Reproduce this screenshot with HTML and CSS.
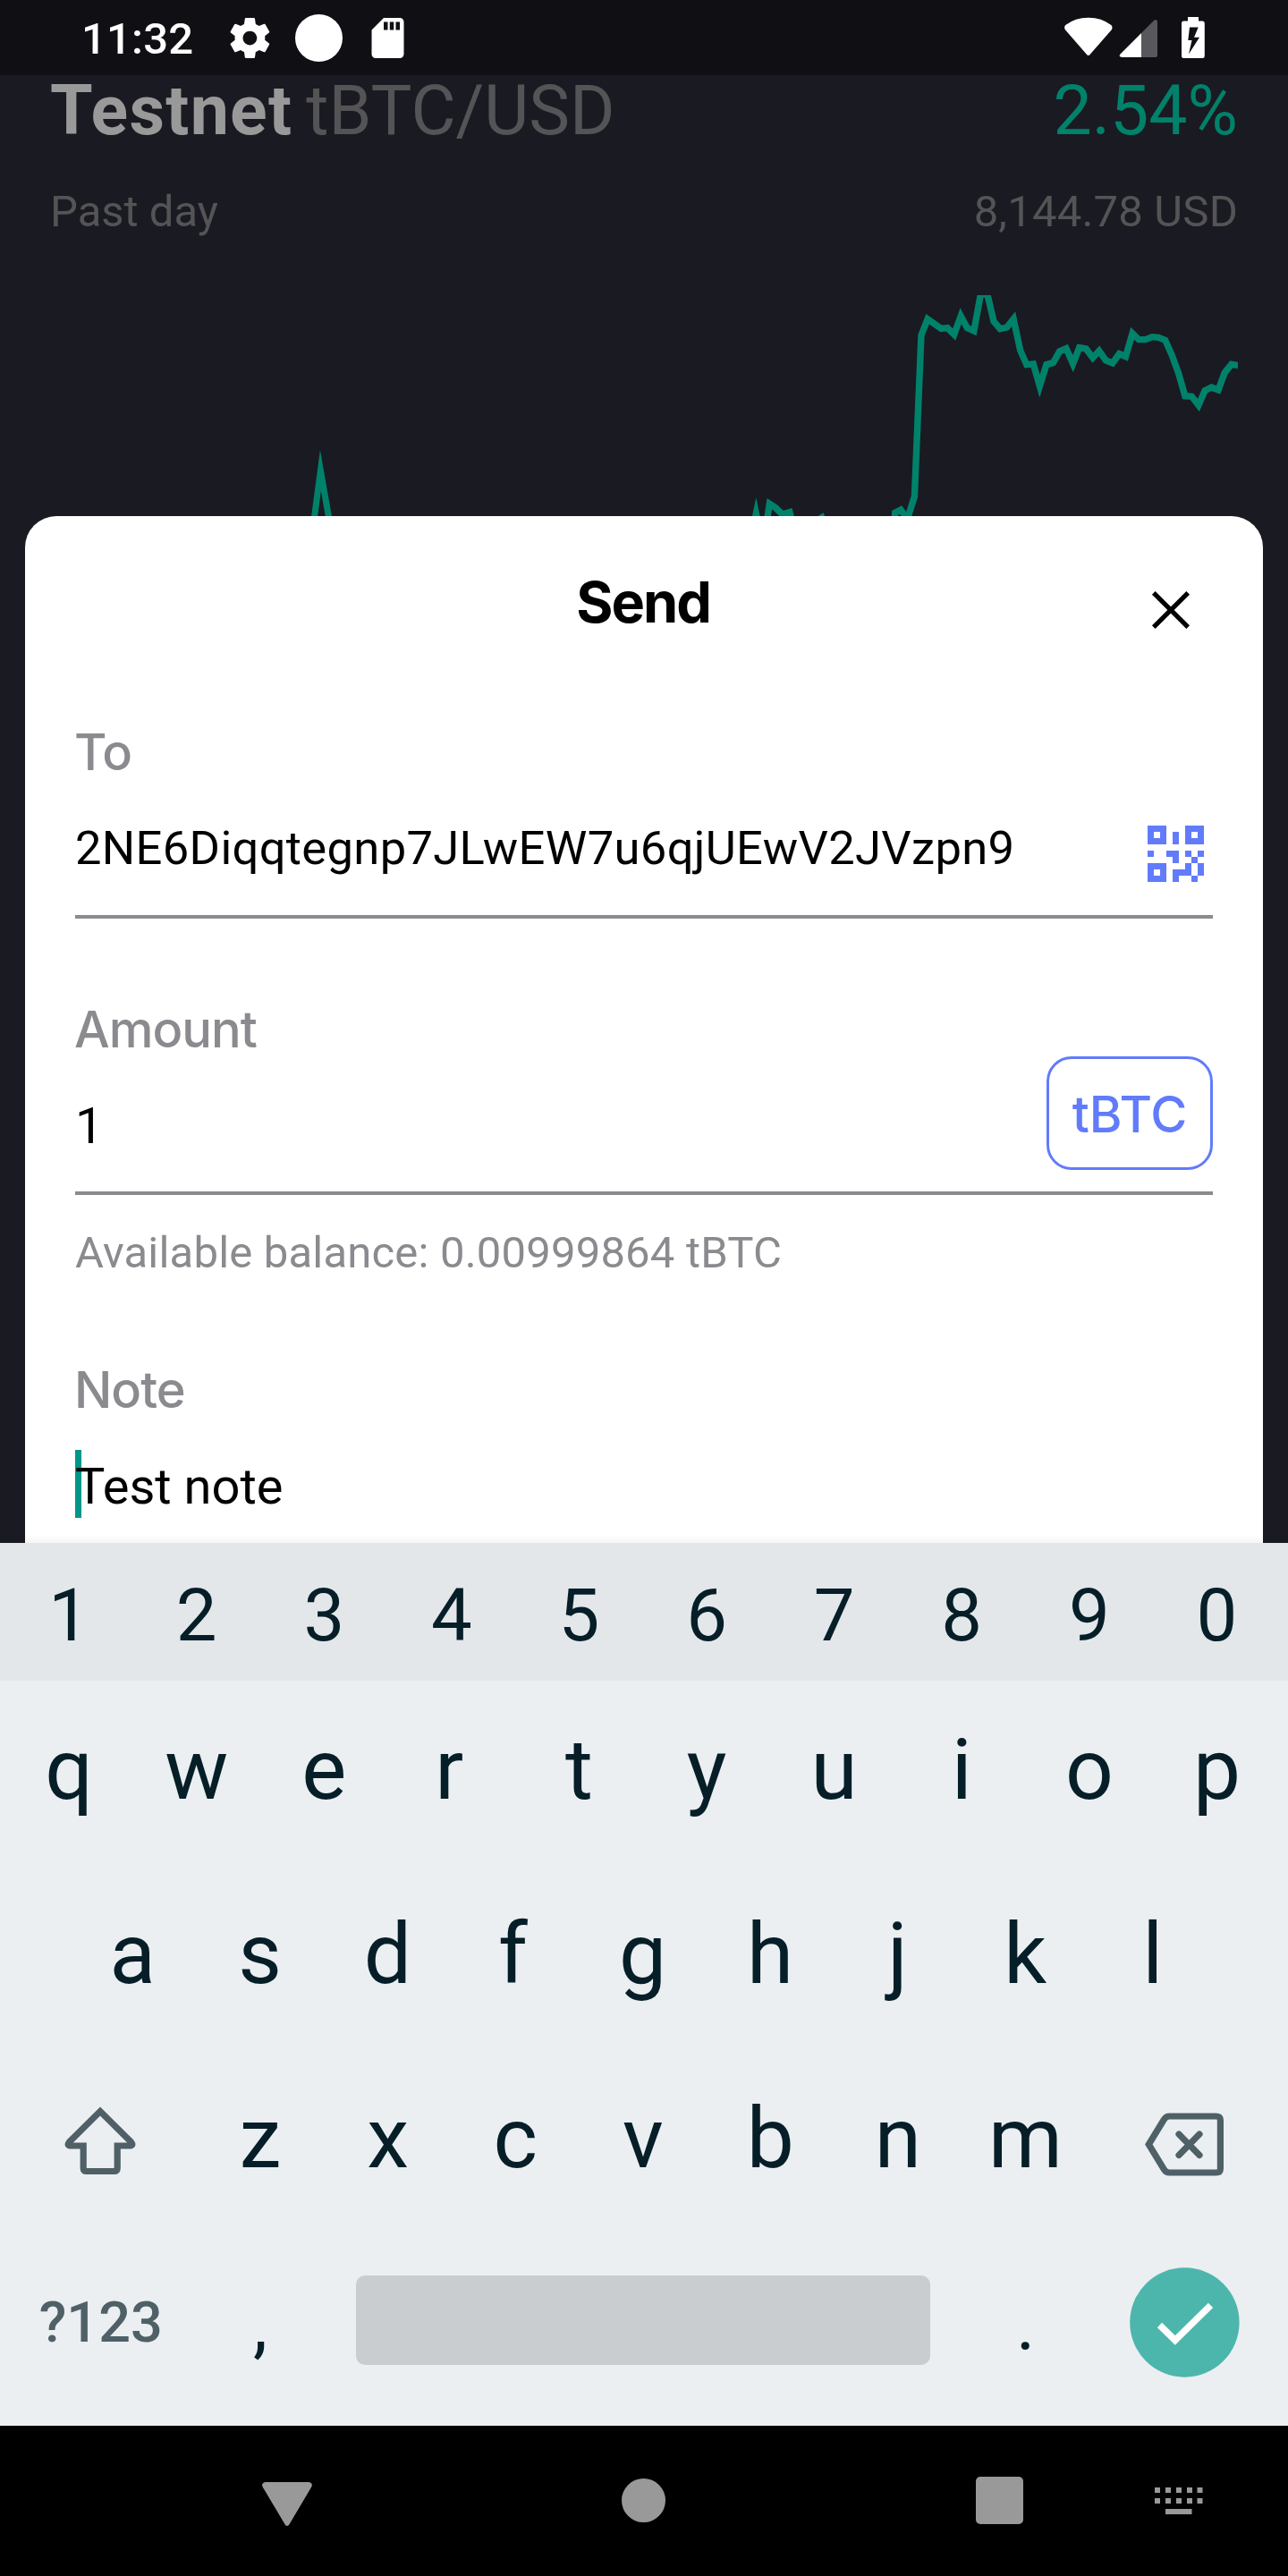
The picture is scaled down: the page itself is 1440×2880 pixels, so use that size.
FILE: index.html
```html
<!DOCTYPE html>
<html lang="en">
<head>
<meta charset="utf-8">
<title>Send</title>
<link rel="stylesheet" href="styles.css">
</head>
<body>
<div class="status">
  <span class="clock">11:32</span>
  <svg class="gear" width="54" height="84" viewBox="252 0 54 84"><path fill="#fff" transform="translate(252.4 15.5) scale(2.25)" d="M19.43 12.98c.04-.32.07-.64.07-.98s-.03-.66-.07-.98l2.11-1.65c.19-.15.24-.42.12-.64l-2-3.46c-.12-.22-.39-.3-.61-.22l-2.49 1c-.52-.4-1.08-.73-1.69-.98l-.38-2.65C14.46 2.18 14.25 2 14 2h-4c-.25 0-.46.18-.49.42l-.38 2.65c-.61.25-1.17.59-1.69.98l-2.49-1c-.23-.09-.49 0-.61.22l-2 3.46c-.13.22-.07.49.12.64l2.11 1.65c-.04.32-.07.65-.07.98s.03.66.07.98l-2.11 1.65c-.19.15-.24.42-.12.64l2 3.46c.12.22.39.3.61.22l2.49-1c.52.4 1.08.73 1.69.98l.38 2.65c.03.24.24.42.49.42h4c.25 0 .46-.18.49-.42l.38-2.65c.61-.25 1.17-.59 1.69-.98l2.49 1c.23.09.49 0 .61-.22l2-3.46c.12-.22.07-.49-.12-.64l-2.11-1.65zM12 15.5c-1.93 0-3.5-1.57-3.5-3.5s1.57-3.5 3.5-3.5 3.5 1.57 3.5 3.5-1.57 3.5-3.5 3.5z"/></svg>
  <svg class="dot" width="54" height="84" viewBox="330 0 54 84"><circle cx="356.5" cy="42.5" r="26.5" fill="#fff"/></svg>
  <svg class="card" width="54" height="84" viewBox="407 0 54 84"><path fill="#fff" transform="translate(406.5 15.5) scale(2.25)" d="M18 2h-8L4.02 8 4 20c0 1.1.9 2 2 2h12c1.1 0 2-.9 2-2V4c0-1.1-.9-2-2-2zm-6 6h-2V4h2v4zm3 0h-2V4h2v4zm3 0h-2V4h2v4z"/></svg>
  <svg class="signals" width="160" height="84" viewBox="1190 0 160 84">
    <path fill="#fff" d="M1191.3 28Q1202 19.7 1216.800 19.700T1242.300 28Q1244.300 30 1243 33L1219 60.500Q1216.800 63.500 1214.600 60.500L1190.700 33Q1189.300 30 1191.300 28z"/>
    <path fill="#57575c" d="M1276 37L1290 23Q1294 20.500 1294 25V62Q1294 64 1292 64H1276z"/>
    <path fill="#fff" d="M1276 37V64H1254Q1250.500 63.500 1252.500 60.500z"/>
    <path fill="#fff" fill-rule="evenodd" d="M1328 19H1340V23.500H1344.500Q1346.800 23.500 1346.800 26V62.500Q1346.800 65 1344.500 65H1323.500Q1321 65 1321 62.500V26Q1321 23.500 1323.500 23.500H1328zM1330 30.500L1328.300 45H1332.500L1329 60.500L1341 41.800H1335L1339.700 30.500z"/>
  </svg>
</div>

<div class="market">
  <div class="pair">
    <div><b>Testnet</b><span class="ticker">tBTC/USD</span></div>
    <span class="change">2.54%</span>
  </div>
  <div class="range"><span>Past day</span><span class="price">8,144.78 USD</span></div>
  <svg class="chart" width="1328" height="247" viewBox="56 330 1328 247">
    <g fill="none" stroke="#00826a" stroke-width="7" stroke-miterlimit="20">
      <path d="M349.900 590L358.400 526L369.600 590"/>
      <path d="M839 603L845.300 573.300L851.500 603"/>
      <g stroke-width="7.400">
        <polyline vector-effect="non-scaling-stroke" transform="translate(820 300) scale(.3954 .33333)" points="94,850 102,790 120,804 138,825 159,818 168,860"/>
        <polyline vector-effect="non-scaling-stroke" transform="translate(820 300) scale(.3954 .33333)" points="230,850 250,836 262,870"/>
        <polyline vector-effect="non-scaling-stroke" transform="translate(820 300) scale(.3954 .33333)" points="455,860 457,820 473,810 492,840 512,765 531,225 549,170 568,186 587,202 605,200 624,222 643,160 661,200 680,210 699,87 718,87 736,178 754,203 773,198 792,170 811,275 829,323 848,321 866,395 885,323 904,317 922,279 941,269 960,320 978,266 997,270 1016,300 1034,277 1053,309 1072,318 1091,287 1109,296 1128,218 1146,239 1165,239 1184,230 1202,232 1221,241 1240,292 1258,350 1277,428 1296,430 1315,459 1333,410 1352,399 1371,408 1389,350 1408,322 1427,326"/>
      </g>
    </g>
  </svg>
</div>

<div class="sheet">
  <div class="sheet-head">
    <h1>Send</h1>
    <svg class="close" width="48" height="48" viewBox="-24 -24 48 48"><path d="M-19.200 -19.200L19.200 19.200M19.200 -19.200L-19.200 19.200" stroke="#000" stroke-width="5.200"/></svg>
  </div>
  <div class="field">
    <label>To</label>
    <div class="row">
      <span class="value address">2NE6Diqqtegnp7JLwEW7u6qjUEwV2JVzpn9</span>
      <svg class="qr" width="63" height="63" viewBox="0 0 9 9" shape-rendering="crispEdges"><path fill="#617bfb" fill-rule="evenodd" d="M0 0h3v3H0zM1 1v1h1V1zM6 0h3v3H6zM7 1v1h1V1zM0 6h3v3H0zM1 7v1h1V7zM4 1h1v2H4zM0 4h1v1H0zM3 4h2v2H4V5H3zM6 4h1v1H6zM8 4h1v1H8zM7 5h1v1H7zM6 6h1v2H5v1H4V7h2zM8 6h1v2H8zM7 8h1v1H7z"/></svg>
    </div>
  </div>
  <div class="field amount">
    <label>Amount</label>
    <div class="row">
      <span class="value">1</span>
      <span class="unit">tBTC</span>
    </div>
  </div>
  <div class="balance">Available balance: 0.00999864 tBTC</div>
  <div class="field note">
    <label>Note</label>
    <div class="value caret">Test note</div>
  </div>
</div>

<div class="keyboard">
  <div class="keys digits"><span>1</span><span>2</span><span>3</span><span>4</span><span>5</span><span>6</span><span>7</span><span>8</span><span>9</span><span>0</span></div>
  <div class="keys"><span>q</span><span>w</span><span>e</span><span class="narrow">r</span><span>t</span><span>y</span><span>u</span><span>i</span><span>o</span><span>p</span></div>
  <div class="keys inset"><span>a</span><span>s</span><span>d</span><span class="narrow">f</span><span>g</span><span>h</span><span>j</span><span>k</span><span>l</span></div>
  <div class="keys">
    <span class="wide"><svg width="90" height="206" viewBox="69 2291 90 206"><path fill="none" stroke="#4f6067" stroke-width="7.200" d="M113 2360.500L147.500 2394.800Q151 2399 145.500 2399H132.200V2424Q132.200 2427.500 128.700 2427.500H97.700Q94.200 2427.500 94.200 2424V2399H80.500Q75 2399 78.500 2394.800z"/></svg></span>
    <span>z</span><span>x</span><span>c</span><span>v</span><span>b</span><span>n</span><span>m</span>
    <span class="wide"><svg width="100" height="206" viewBox="1275 2291 100 206"><g fill="none" stroke="#4f6067" stroke-width="7.200"><path d="M1284.300 2397.500L1301.500 2369.500Q1303.500 2366 1307.500 2366H1359.500Q1364.400 2366 1364.400 2370.500V2424.500Q1364.400 2429 1359.500 2429H1307.500Q1303.500 2429 1301.500 2425.500z"/><path stroke-linecap="round" d="M1318 2386L1341 2409.500M1341 2386L1318 2409.500"/></g></svg></span>
  </div>
  <div class="keys bottom">
    <span class="wide mode">?123</span>
    <span class="mark">,</span>
    <span class="space"></span>
    <span class="mark">.</span>
    <span class="wide"><svg class="done" width="123" height="123" viewBox="1264 2535 123 123"><circle cx="1325.400" cy="2596.500" r="61.200" fill="#4db6ac"/><path fill="none" stroke="#fff" stroke-width="7.500" d="M1297.500 2599.500L1314.800 2616.500L1354.500 2577.300"/></svg></span>
  </div>
</div>

<div class="nav">
  <svg class="back" width="56" height="50" viewBox="292.800 2775 56 50"><path fill="#999" d="M296.500 2775H345Q350 2776 348 2780.500L322.800 2823Q320.800 2825 318.800 2823L293.500 2780.500Q291.500 2776 296.500 2775z"/></svg>
  <span class="home"></span>
  <span class="recent"></span>
  <svg class="ime" width="54" height="32" viewBox="0 0 54 32"><path fill="#999" d="M0 1h6v6H0zM12 1h6v6h-6zM24 1h6v6h-6zM36 1h6v6h-6zM47.500 1h6v6h-6zM0 13h6v6H0zM12 13h6v6h-6zM24 13h6v6h-6zM36 13h6v6h-6zM47.500 13h6v6h-6zM12 25h29.500v6H12z"/></svg>
</div>
</body>
</html>
```
FILE: styles.css
```css
* { box-sizing: border-box; }
body {
  margin: 0;
  width: 1440px;
  height: 2880px;
  overflow: hidden;
  background: #1a1a22;
  font-family: Roboto, sans-serif;
  display: flex;
  flex-direction: column;
}
svg { display: block; flex: none; }

.status { height: 84px; background: #100f14; display: flex; color: #fff; }
.clock { width: 161px; margin-left: 91px; padding-top: 2px; font-size: 49px; font-weight: 500; line-height: 84px; letter-spacing: .2px; }
.dot { margin-left: 24px; }
.card { margin-left: 23px; }
.signals { margin-left: 729px; }

.market { height: 493px; padding: 1px 56px 0; }
.pair { display: flex; justify-content: space-between; font-size: 77px; line-height: 78px; white-space: nowrap; }
.pair b { color: #999; letter-spacing: 1.3px; }
.ticker { color: #545456; margin-left: 15px; }
.change { color: #00826a; }
.range { margin-top: 44px; display: flex; justify-content: space-between; font-size: 49px; line-height: 60px; color: #545456; }
.price { letter-spacing: .2px; }
.chart { margin-top: 63px; }

.sheet { height: 1148px; margin: 0 28px; padding: 58px 56px 0; background: #fff; border-radius: 35px 35px 0 0; }
.sheet-head { display: grid; grid-template-columns: 1fr auto 1fr; height: 76px; }
h1 { grid-column: 2; margin: 0 2px 0 0; font: 700 63px/76px Inter, sans-serif; letter-spacing: -2px; color: #000; }
.close { justify-self: end; margin: 23px 23px 0 0; }
.field { margin-top: 96px; }
.field label { display: block; margin-left: -1px; font: 500 56px/68px Inter, sans-serif; letter-spacing: -1px; color: #8a8a8f; }
.row { height: 152px; border-bottom: 4px solid #8a8a8f; display: flex; justify-content: space-between; }
.value { margin-top: 42px; font-size: 56px; line-height: 64px; color: #000; }
.address { margin-top: 41px; font-size: 52.5px; letter-spacing: .33px; }
.qr { margin: 48px 10px 0 0; }
.amount { margin-top: 90px; }
.amount .row { height: 151px; }
.unit { width: 186px; height: 127px; margin-top: -4px; border: 3.500px solid #617bfb; border-radius: 28px; text-align: center; font: 500 56px/124px Inter, sans-serif; color: #617bfb; }
.balance { margin-top: 35px; font-size: 49px; line-height: 60px; letter-spacing: .19px; color: #8a8a8f; }
.note { margin-top: 89px; }
.caret { position: relative; z-index: 0; }
.caret::before { content: ""; position: absolute; z-index: -1; left: 0; top: -9px; width: 7px; height: 76px; background: #009688; }

.keyboard { position: relative; height: 987px; background: #ebeff2; box-shadow: 0 0 12px rgba(0, 0, 0, .08); color: #061e27; }
.keys { display: flex; height: 206px; padding: 0 5.800px; font-size: 94.500px; line-height: 199px; }
.keys span { flex: none; width: 142.600px; text-align: center; }
.keys .wide { width: 213.900px; display: flex; justify-content: center; }
.keys .narrow { padding-right: 5px; }
.digits { height: 154px; background: #e3e7ea; font-size: 81.500px; line-height: 163px; }
.inset { padding-left: 76.800px; }
.keys .mode { font-size: 63px; font-weight: 500; line-height: 199px; color: #4f6067; }
.keys .mark { font-size: 81px; line-height: 206px; }
.keys .space { width: 642px; height: 100px; margin: 47px 35px 0 36px; border-radius: 10px; background: #c9cdd0; }
.done { margin-top: 38px; }

.nav { height: 168px; background: #000; display: flex; }
.back { margin: 63px 0 0 293px; }
.home { width: 49px; height: 49px; margin: 59px 0 0 346px; border-radius: 50%; background: #999; }
.recent { width: 53px; height: 53px; margin: 57px 0 0 347px; border-radius: 5px; background: #999; }
.ime { margin: 68px 0 0 147px; }
```
